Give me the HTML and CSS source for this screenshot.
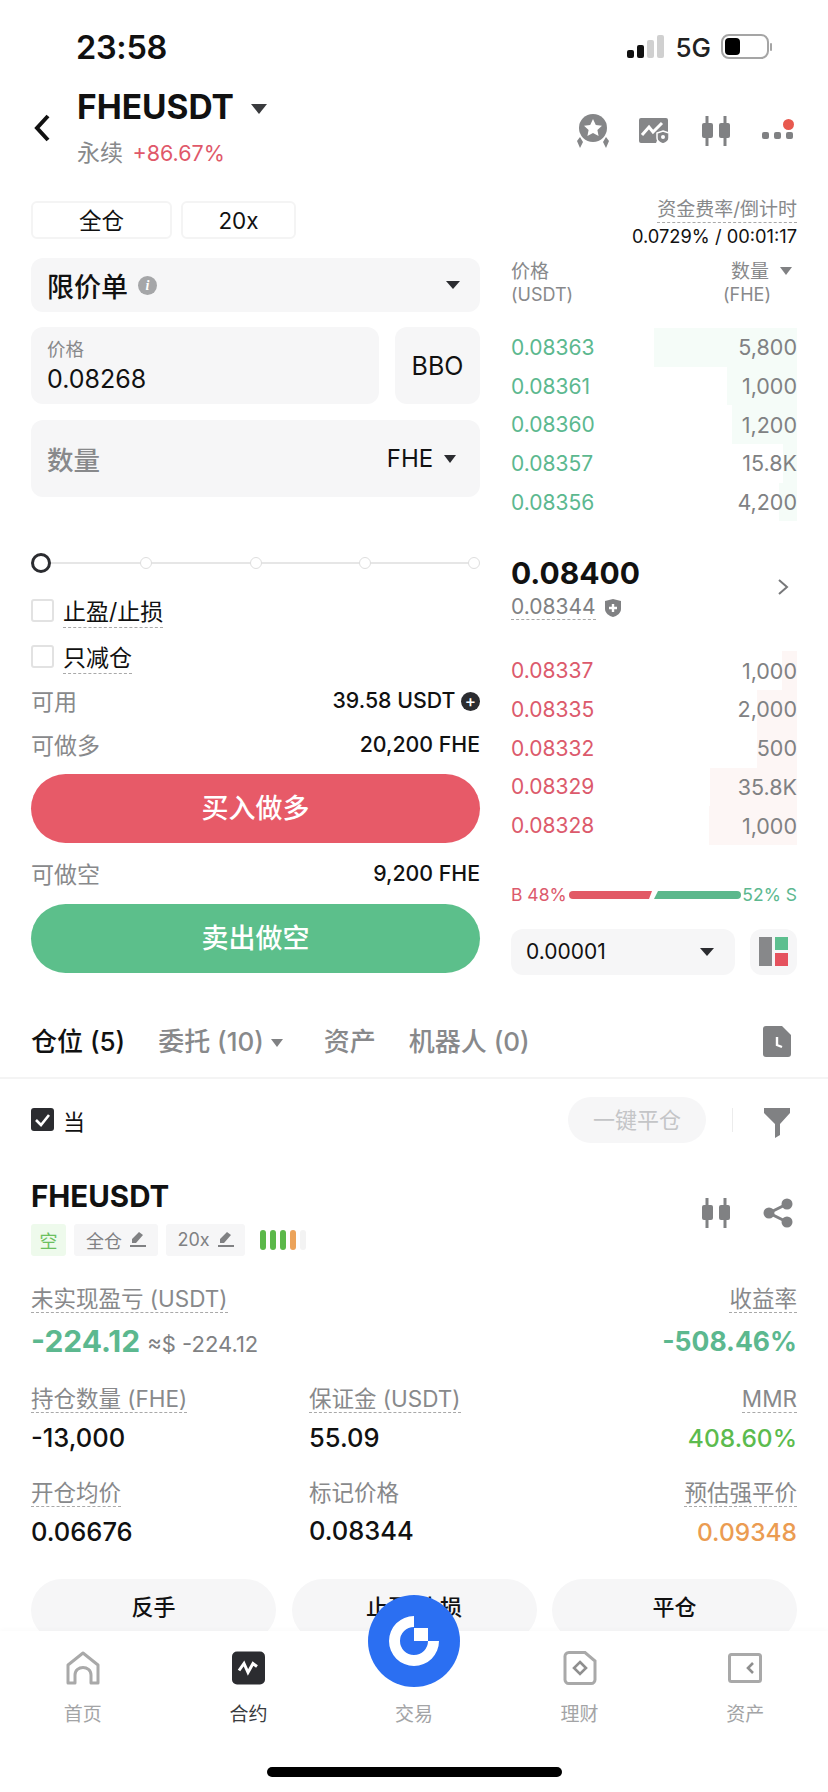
FILE: index.html
```html
<!DOCTYPE html>
<html lang="zh-CN">
<head>
  <meta charset="UTF-8">
  <title>FHEUSDT</title>
  <link rel="stylesheet" href="styles.css">
</head>
<body>
<div class="phone">
  <!-- 状态栏 -->
  <div class="status">
    <span class="time">23:58</span>
    <div class="status-right">
      <svg class="signal" width="38" height="24" viewBox="0 0 38 24">
        <rect x="0" y="15" width="7" height="8" rx="2" fill="#111"/>
        <rect x="10" y="10" width="7" height="13" rx="2" fill="#111"/>
        <rect x="20" y="5" width="7" height="18" rx="2" fill="#d0d0d0"/>
        <rect x="30" y="0" width="7" height="23" rx="2" fill="#d0d0d0"/>
      </svg>
      <span class="net">5G</span>
      <svg width="52" height="26" viewBox="0 0 52 26">
        <rect x="1" y="1" width="46" height="23" rx="7" fill="#fff" stroke="#a5a5a5" stroke-width="2"/>
        <rect x="4" y="4" width="15" height="17" rx="4" fill="#000"/>
        <rect x="49" y="9" width="2" height="8" rx="1" fill="#a5a5a5"/>
      </svg>
    </div>
  </div>

  <!-- 顶部标题 -->
  <div class="header">
    <svg class="back" width="20" height="28" viewBox="0 0 20 28"><path d="M16 2 L5 14 L16 26" fill="none" stroke="#111" stroke-width="4"/></svg>
    <div class="title-wrap">
      <div class="title">FHEUSDT <i class="tri tri-title"></i></div>
      <div class="subtitle">永续 <span class="up">+86.67%</span></div>
    </div>
    <div class="header-icons">
      <svg class="medal" width="36" height="36" viewBox="0 0 36 36">
        <circle cx="18" cy="15" r="14" fill="#858688"/>
        <path d="M18 6 L20.8 12 L27 12.8 L22.4 17 L23.6 23 L18 20 L12.4 23 L13.6 17 L9 12.8 L15.2 12 Z" fill="#fff"/>
        <path d="M2 28 L5 24 L8 29 L5 35 Z M34 28 L31 24 L28 29 L31 35 Z" fill="#858688"/>
      </svg>
      <svg width="32" height="28" viewBox="0 0 32 28">
        <path d="M3 1 H28 A2 2 0 0 1 30 3 V16 H22 L18 26 H3 A2 2 0 0 1 1 24 V3 A2 2 0 0 1 3 1 Z" fill="#858688"/>
        <path d="M4 18 L11 10 L15 15 L24 6" fill="none" stroke="#fff" stroke-width="3"/>
        <path d="M25 14 L31 16 V21 C31 24 28 26 25 27 C22 26 19 24 19 21 V16 Z" fill="#858688" stroke="#fff" stroke-width="1.5"/>
        <circle cx="25" cy="20" r="2" fill="#fff"/>
      </svg>
      <svg width="30" height="30" viewBox="0 0 30 30"><use href="#candles"/></svg>
      <div class="more">
        <i></i><i></i><i></i><b></b>
      </div>
    </div>
  </div>

  <!-- 下单区 + 盘口 -->
  <div class="trade">
    <div class="form">
      <div class="mode-row">
        <div class="mode mode-a">全仓</div>
        <div class="mode mode-b">20x</div>
      </div>
      <div class="box order-type">
        <span class="order-name">限价单</span>
        <i class="info-dot">i</i>
        <i class="tri tri-box"></i>
      </div>
      <div class="price-row">
        <div class="box price-box">
          <div class="price-label">价格</div>
          <div class="price-value">0.08268</div>
        </div>
        <div class="box bbo">BBO</div>
      </div>
      <div class="box qty-box">
        <span class="qty-label">数量</span>
        <span class="qty-unit">FHE <i class="tri tri-box"></i></span>
      </div>
      <div class="slider">
        <i class="knob"></i><i class="dot"></i><i class="dot"></i><i class="dot"></i><i class="dot"></i>
      </div>
      <label class="check check-first"><i class="checkbox"></i><span class="dotted">止盈/止损</span></label>
      <label class="check"><i class="checkbox"></i><span class="dotted">只减仓</span></label>
      <div class="line line-first">
        <span class="muted">可用</span>
        <span>39.58 USDT <i class="plus">+</i></span>
      </div>
      <div class="line"><span class="muted">可做多</span><span>20,200 FHE</span></div>
      <div class="action buy">买入做多</div>
      <div class="line"><span class="muted">可做空</span><span>9,200 FHE</span></div>
      <div class="action sell">卖出做空</div>
    </div>

    <div class="book">
      <div class="funding">
        <span class="funding-label">资金费率/倒计时</span>
        <span class="funding-value">0.0729% / 00:01:17</span>
      </div>
      <div class="book-head">
        <div>价格<br><small>(USDT)</small></div>
        <div class="book-head-right">
          <span>数量</span><i class="tri tri-head"></i><br><small>(FHE)</small>
        </div>
      </div>
      <div class="rows rows-ask">
        <div class="row ask"><i class="depth" style="width:143px"></i><span>0.08363</span><em>5,800</em></div>
        <div class="row ask"><i class="depth" style="width:70px"></i><span>0.08361</span><em>1,000</em></div>
        <div class="row ask"><i class="depth" style="width:65px"></i><span>0.08360</span><em>1,200</em></div>
        <div class="row ask"><i class="depth" style="width:14px"></i><span>0.08357</span><em>15.8K</em></div>
        <div class="row ask"><i class="depth" style="width:18px"></i><span>0.08356</span><em>4,200</em></div>
      </div>
      <div class="mark-wrap">
        <div>
          <div class="last">0.08400</div>
          <div class="mark"><span class="dotted">0.08344</span>
            <svg width="18" height="20" viewBox="0 0 18 20"><path d="M9 1 L17 3 V11 C17 15 13 18 9 19 C5 18 1 15 1 11 V3 Z" fill="#808183"/><path d="M9 6 V14 M5 10 H13" stroke="#fff" stroke-width="2.4"/></svg>
          </div>
        </div>
        <svg width="12" height="18" viewBox="0 0 12 18"><path d="M2 2 L10 9 L2 16" fill="none" stroke="#77787a" stroke-width="2"/></svg>
      </div>
      <div class="rows rows-bid">
        <div class="row bid"><i class="depth" style="width:15px"></i><span>0.08337</span><em>1,000</em></div>
        <div class="row bid"><i class="depth" style="width:40px"></i><span>0.08335</span><em>2,000</em></div>
        <div class="row bid"><i class="depth" style="width:40px"></i><span>0.08332</span><em>500</em></div>
        <div class="row bid"><i class="depth" style="width:87px"></i><span>0.08329</span><em>35.8K</em></div>
        <div class="row bid"><i class="depth" style="width:88px"></i><span>0.08328</span><em>1,000</em></div>
      </div>
      <div class="ratio">
        <span class="down">B 48%</span>
        <svg width="172" height="8" viewBox="0 0 172 8">
          <path d="M4 0 H83 L80 8 H4 A4 4 0 0 1 4 0 Z" fill="#e25a66"/>
          <path d="M89 0 H168 A4 4 0 0 1 168 8 H85 Z" fill="#5cb88c"/>
        </svg>
        <span class="green">52% S</span>
      </div>
      <div class="book-foot">
        <div class="box precision">0.00001 <i class="tri tri-box"></i></div>
        <div class="box layout-btn">
          <svg width="30" height="29" viewBox="0 0 30 29">
            <rect x="0" y="0" width="13" height="29" fill="#87888a"/>
            <rect x="16" y="0" width="13" height="13" fill="#5dbf8f"/>
            <rect x="16" y="16" width="13" height="13" fill="#e5525e"/>
          </svg>
        </div>
      </div>
    </div>
  </div>

  <!-- 仓位 tab -->
  <div class="tabs">
    <span class="tab active">仓位 (5)</span>
    <span class="tab tab-orders">委托 (10) <i class="tri tri-tab"></i></span>
    <span class="tab">资产</span>
    <span class="tab">机器人 (0)</span>
    <svg class="tab-file" width="28" height="31" viewBox="0 0 28 31">
      <path d="M3 0 H19 L28 9 V28 A3 3 0 0 1 25 31 H3 A3 3 0 0 1 0 28 V3 A3 3 0 0 1 3 0 Z" fill="#808183"/>
      <path d="M14 11 V19 L19 21" fill="none" stroke="#fff" stroke-width="2.4"/>
    </svg>
  </div>

  <div class="filter-row">
    <div class="current">
      <svg width="23" height="23" viewBox="0 0 23 23"><rect width="23" height="23" rx="3" fill="#2b2c30"/><path d="M5 12 L10 17 L18 7" fill="none" stroke="#fff" stroke-width="2.6"/></svg>
      <span>当</span>
    </div>
    <div class="close-all">一键平仓</div>
    <i class="vline"></i>
    <svg class="funnel" width="26" height="30" viewBox="0 0 26 30"><path d="M0 0 H26 V5 L16 16 V27 L11 30 V16 L0 5 Z" fill="#808183"/></svg>
  </div>

  <!-- 仓位卡片 -->
  <div class="position">
    <div class="pos-head">
      <span class="pos-name">FHEUSDT</span>
      <div class="pos-icons">
        <svg width="30" height="30" viewBox="0 0 30 30"><use href="#candles"/></svg>
        <svg width="30" height="30" viewBox="0 0 30 30">
          <path d="M24 6 L6 15 L24 24" fill="none" stroke="#808183" stroke-width="3"/>
          <circle cx="24" cy="6" r="5.5" fill="#808183"/><circle cx="6" cy="15" r="5.5" fill="#808183"/><circle cx="24" cy="24" r="5.5" fill="#808183"/>
        </svg>
      </div>
    </div>
    <div class="tags">
      <span class="tag tag-short">空</span>
      <span class="tag tag-edit">全仓 <svg width="16" height="15" viewBox="0 0 16 15"><use href="#pencil"/></svg></span>
      <span class="tag tag-edit tag-lev">20x <svg width="16" height="15" viewBox="0 0 16 15"><use href="#pencil"/></svg></span>
      <span class="adl"><i></i><i></i><i></i><i class="adl-o"></i><i class="adl-e"></i></span>
    </div>
    <div class="pnl-head">
      <span class="stat-label dotted">未实现盈亏 (USDT)</span>
      <span class="stat-label dotted">收益率</span>
    </div>
    <div class="pnl-value">
      <span class="pnl green">-224.12 <small>≈$ -224.12</small></span>
      <span class="pnl-rate green">-508.46%</span>
    </div>
    <div class="stats">
      <div class="stat"><span class="stat-label dotted">持仓数量 (FHE)</span><b>-13,000</b></div>
      <div class="stat"><span class="stat-label dotted">保证金 (USDT)</span><b>55.09</b></div>
      <div class="stat stat-right"><span class="stat-label dotted">MMR</span><b class="lime">408.60%</b></div>
      <div class="stat"><span class="stat-label dotted">开仓均价</span><b>0.06676</b></div>
      <div class="stat"><span class="stat-label">标记价格</span><b>0.08344</b></div>
      <div class="stat stat-right"><span class="stat-label dotted">预估强平价</span><b class="orange">0.09348</b></div>
    </div>
    <div class="pos-actions">
      <div class="pos-btn">反手</div>
      <div class="pos-btn">止盈/止损</div>
      <div class="pos-btn">平仓</div>
    </div>
  </div>

  <!-- 底部导航 -->
  <div class="nav">
    <div class="nav-item">
      <svg width="34" height="34" viewBox="0 0 34 34"><path d="M2 32 V14 L17 2 L32 14 V32 H25 V24 C25 14 9 14 9 24 V32 Z" fill="none" stroke="#a9a9a9" stroke-width="3" stroke-linejoin="round"/></svg>
      <span>首页</span>
    </div>
    <div class="nav-item nav-on">
      <svg width="33" height="33" viewBox="0 0 33 33"><rect width="33" height="33" rx="5" fill="#2b2c30"/><path d="M7 19 L12 12 L16 21 L21 12 L25 15" fill="none" stroke="#fff" stroke-width="3"/></svg>
      <span>合约</span>
    </div>
    <div class="nav-item">
      <i class="nav-gap"></i>
      <span>交易</span>
    </div>
    <div class="nav-item">
      <svg width="34" height="34" viewBox="0 0 34 34"><path d="M6 1.5 H22 L32 10 V28 A4 4 0 0 1 28 32.5 H6 A4 4 0 0 1 2 28 V6 A4 4 0 0 1 6 1.5 Z" fill="none" stroke="#a9a9a9" stroke-width="3"/><path d="M17 11 L23 17 L17 23 L11 17 Z" fill="none" stroke="#8f8f8f" stroke-width="2.6"/></svg>
      <span>理财</span>
    </div>
    <div class="nav-item">
      <svg width="34" height="30" viewBox="0 0 34 30"><rect x="1.5" y="1.5" width="31" height="27" rx="2" fill="none" stroke="#a9a9a9" stroke-width="3"/><path d="M25 10 L20 15 L25 20" fill="none" stroke="#8f8f8f" stroke-width="2.6"/></svg>
      <span>资产</span>
    </div>
  </div>
  <div class="fab">
    <svg width="56" height="56" viewBox="-28 -28 56 56">
      <path d="M0 -25 A25 25 0 1 0 25 0 H14 A14 14 0 1 1 0 -14 Z" fill="#fff"/>
      <rect x="0" y="-13" width="14" height="13" fill="#fff"/>
    </svg>
  </div>
  <div class="home-bar"></div>
</div>

<!-- 重复使用的图标 -->
<svg class="defs" width="0" height="0">
  <symbol id="candles" viewBox="0 0 30 30">
    <path d="M6 0 V30 M24 0 V30" stroke="#808183" stroke-width="3"/>
    <rect x="1" y="7" width="11" height="15" rx="2" fill="#808183"/>
    <rect x="18" y="7" width="11" height="15" rx="2" fill="#808183"/>
  </symbol>
  <symbol id="pencil" viewBox="0 0 16 15">
    <path d="M9 0 L13 3 L6 11 L2 11 L2 7 Z M0 13 H16 V15 H0 Z" fill="#808183"/>
  </symbol>
</svg>
</body>
</html>
```

FILE: styles.css
```css
/* 基本样式 */
* {
  box-sizing: border-box;
}
body {
  margin: 0;
  background-color: #fff;
  color: #111;
  font-family: Inter, "Noto Sans CJK SC", sans-serif;
}
i {
  font-style: normal;
}
.phone {
  position: relative;
  width: 828px;
  height: 1792px;
  overflow: hidden;
}
.defs {
  position: absolute;
}

/* 三角箭头 */
.tri {
  display: inline-block;
  width: 0;
  height: 0;
  border-left: 7px solid transparent;
  border-right: 7px solid transparent;
  border-top: 8px solid #2b2c30;
}
.tri-title {
  border-left-width: 8px;
  border-right-width: 8px;
  border-top-width: 10px;
  border-top-color: #3a3b3e;
  margin-left: 9px;
  vertical-align: 5px;
}
.tri-head {
  border-left-width: 6px;
  border-right-width: 6px;
  border-top-color: #808183;
  margin-left: 11px;
  vertical-align: 3px;
}
.tri-tab {
  border-left-width: 6px;
  border-right-width: 6px;
  border-top-color: #808183;
  vertical-align: 4px;
}

/* 状态栏 */
.status {
  display: flex;
  align-items: center;
  justify-content: space-between;
  height: 66px;
  padding: 28px 55px 0 76px;
}
.time {
  font-size: 32.5px;
  font-weight: 600;
  letter-spacing: -0.3px;
}
.status-right {
  display: flex;
  align-items: center;
  gap: 10px;
}
.net {
  font-size: 26px;
  font-weight: 500;
  color: #222;
}

/* 标题 */
.header {
  display: flex;
  align-items: center;
  height: 100px;
  padding: 20px 35px 0 32px;
}
.back {
  margin-top: 4px;
  margin-right: 25px;
}
.title-wrap {
  flex: 1;
}
.title {
  font-size: 33.5px;
  font-weight: 700;
  line-height: 46px;
}
.subtitle {
  margin-top: 8px;
  font-size: 23px;
  line-height: 30px;
  color: #88898b;
}
.up {
  margin-left: 3px;
  color: #e0586a;
  font-size: 21.5px;
}
.header-icons {
  display: flex;
  align-items: center;
  gap: 31px;
  margin-top: 10px;
}
.medal {
  margin-right: -4px;
}
.more {
  position: relative;
  display: flex;
  gap: 5px;
  margin-top: 8px;
}
.more i {
  width: 7px;
  height: 7px;
  border-radius: 2px;
  background-color: #808183;
}
.more b {
  position: absolute;
  top: -13px;
  right: -1px;
  width: 11px;
  height: 11px;
  border-radius: 50%;
  background-color: #e8594f;
}

/* 下单区与盘口 */
.trade {
  display: grid;
  grid-template-columns: 449px 286px;
  column-gap: 31px;
  padding: 0 31px;
  margin-top: 30px;
}
.form {
  padding-top: 5px;
}
.mode-row {
  display: flex;
  gap: 9px;
}
.mode {
  height: 38px;
  border: 2px solid #f4f4f4;
  border-radius: 6px;
  text-align: center;
  font-size: 22.5px;
  line-height: 35px;
}
.mode-a {
  width: 141px;
}
.mode-b {
  width: 115px;
}
.box {
  display: flex;
  align-items: center;
  background-color: #f6f6f7;
  border-radius: 12px;
}
.order-type {
  height: 54px;
  margin-top: 19px;
  padding: 0 20px 0 16px;
}
.order-name {
  font-size: 27px;
  font-weight: 500;
}
.info-dot {
  width: 19px;
  height: 19px;
  margin-left: 10px;
  margin-right: auto;
  border-radius: 50%;
  background-color: #a5a6a8;
  color: #fff;
  font-family: "Liberation Serif", serif;
  font-size: 14px;
  font-weight: 700;
  font-style: italic;
  line-height: 19px;
  text-align: center;
}
.price-row {
  display: flex;
  gap: 16px;
  margin-top: 15px;
}
.price-box {
  display: block;
  flex: 1;
  height: 77px;
  padding: 10px 16px 0;
}
.price-label {
  font-size: 18.5px;
  line-height: 24px;
  color: #88898b;
}
.price-value {
  margin-top: 4px;
  font-size: 25px;
  line-height: 28px;
}
.bbo {
  justify-content: center;
  width: 85px;
  height: 77px;
  font-size: 25px;
}
.qty-box {
  justify-content: space-between;
  height: 77px;
  margin-top: 16px;
  padding: 0 24px 0 16px;
}
.qty-label {
  font-size: 26.5px;
  font-weight: 500;
  color: #88898b;
}
.qty-unit {
  font-size: 24px;
}
.qty-unit .tri {
  border-left-width: 6px;
  border-right-width: 6px;
  margin-left: 4px;
  vertical-align: 4px;
}
.slider {
  position: relative;
  display: flex;
  align-items: center;
  justify-content: space-between;
  height: 20px;
  margin-top: 56px;
}
.slider::before {
  content: "";
  position: absolute;
  left: 10px;
  right: 4px;
  top: 9px;
  height: 2px;
  background-color: #e6e6e6;
}
.knob {
  position: relative;
  width: 20px;
  height: 20px;
  margin-right: -8px;
  border: 3.5px solid #2b2c30;
  border-radius: 50%;
  background-color: #fff;
}
.dot {
  position: relative;
  width: 12px;
  height: 12px;
  border: 1.5px solid #dedede;
  border-radius: 50%;
  background-color: #fff;
}
.check {
  display: flex;
  align-items: center;
  gap: 9px;
  height: 22px;
  margin-top: 24px;
  font-size: 23px;
}
.check-first {
  margin-top: 26px;
}
.checkbox {
  width: 23px;
  height: 23px;
  border: 2px solid #e2e2e2;
  border-radius: 3px;
}
.dotted {
  border-bottom: 1px dashed #a9a9a9;
}
.line {
  display: flex;
  align-items: center;
  justify-content: space-between;
  height: 30px;
  margin-top: 15px;
  font-size: 21.3px;
  font-weight: 500;
}
.line-first {
  margin-top: 18px;
}
.line + .line {
  margin-top: 14px;
}
.muted {
  color: #88898b;
  font-size: 23px;
  font-weight: 400;
}
.plus {
  display: inline-block;
  width: 19px;
  height: 19px;
  border-radius: 50%;
  background-color: #2b2c30;
  color: #fff;
  font-size: 17px;
  line-height: 18px;
  text-align: center;
  vertical-align: 1px;
}
.action {
  height: 69px;
  margin-top: 15px;
  border-radius: 35px;
  color: #fff;
  font-size: 27px;
  font-weight: 500;
  line-height: 69px;
  text-align: center;
}
.buy {
  background-color: #e75a68;
}
.sell {
  margin-top: 16px;
  background-color: #5cbf8b;
}

/* 盘口 */
.funding {
  display: flex;
  flex-direction: column;
  align-items: flex-end;
  height: 62px;
  margin-top: 2px;
}
.funding-label {
  font-size: 19px;
  line-height: 24px;
  color: #88898b;
  border-bottom: 1px dashed #a9a9a9;
}
.funding-value {
  font-size: 18.3px;
  line-height: 26px;
}
.book-head {
  display: flex;
  justify-content: space-between;
  height: 68px;
  font-size: 19px;
  line-height: 23px;
  color: #88898b;
}
.book-head small {
  font-size: 18px;
}
.book-head-right {
  text-align: right;
  padding-right: 5px;
}
.book-head-right small {
  margin-right: 21px;
}
.row {
  position: relative;
  display: flex;
  align-items: center;
  justify-content: space-between;
  height: 38.7px;
  font-size: 21px;
}
.row span {
  position: relative;
}
.row em {
  position: relative;
  font-size: 21.5px;
  font-style: normal;
  color: #808183;
}
.depth {
  position: absolute;
  top: 0;
  right: 0;
  bottom: 0;
}
.ask span {
  color: #5cb88f;
}
.ask .depth {
  background-color: #f5fcf8;
}
.bid span {
  color: #dc5a6c;
}
.bid .depth {
  background-color: #fdf6f5;
}
.mark-wrap {
  display: flex;
  align-items: center;
  justify-content: space-between;
  height: 132px;
  padding-right: 8px;
}
.last {
  font-size: 30px;
  font-weight: 700;
  line-height: 38px;
}
.mark {
  display: flex;
  align-items: center;
  gap: 8px;
  margin-top: 3px;
  font-size: 21px;
  line-height: 24px;
  color: #808183;
}
.rows-bid {
  margin-top: -2px;
}
.ratio {
  display: flex;
  align-items: center;
  justify-content: space-between;
  height: 24px;
  margin-top: 38px;
  font-size: 17.5px;
}
.down {
  color: #dc5a6c;
}
.green {
  color: #5cb88f;
}
.book-foot {
  display: flex;
  justify-content: space-between;
  margin-top: 22px;
}
.precision {
  justify-content: space-between;
  width: 224px;
  height: 46px;
  padding: 0 21px 0 15px;
  font-size: 21px;
}
.layout-btn {
  justify-content: center;
  width: 47px;
  height: 46px;
}

/* tab */
.tabs {
  display: flex;
  align-items: center;
  gap: 33px;
  height: 73px;
  margin-top: 31px;
  padding: 0 37px 3px 31px;
  border-bottom: 2px solid #f4f4f4;
  font-size: 26px;
  font-weight: 500;
  color: #88898b;
}
.active {
  color: #111;
}
.tab-orders {
  margin-right: 8px;
}
.tab-file {
  margin-top: 4px;
  margin-left: auto;
}
.filter-row {
  display: flex;
  align-items: center;
  height: 46px;
  margin-top: 18px;
  padding: 0 38px 0 31px;
}
.current {
  display: flex;
  align-items: center;
  gap: 9px;
  margin-right: auto;
  font-size: 22px;
}
.close-all {
  width: 138px;
  height: 46px;
  border-radius: 23px;
  background-color: #f6f6f7;
  color: #c4c5c7;
  font-size: 22px;
  line-height: 46px;
  text-align: center;
}
.vline {
  width: 1px;
  height: 24px;
  margin: 0 31px 0 26px;
  background-color: #ececec;
}
.funnel {
  margin-top: 6px;
}

/* 仓位卡片 */
.position {
  padding: 0 31px;
}
.pos-head {
  display: flex;
  align-items: center;
  justify-content: space-between;
  height: 36px;
  margin-top: 35px;
}
.pos-name {
  font-size: 29.5px;
  font-weight: 700;
}
.pos-icons {
  display: flex;
  gap: 32px;
  margin-top: 34px;
  margin-right: 4px;
}
.tags {
  display: flex;
  align-items: center;
  gap: 8px;
  height: 32px;
  margin-top: 10px;
}
.tag {
  display: flex;
  align-items: center;
  justify-content: center;
  height: 32px;
  border-radius: 3px;
  background-color: #f6f6f7;
  color: #808183;
  font-size: 18px;
}
.tag-short {
  width: 35px;
  background-color: #eefaec;
  color: #6cc05e;
}
.tag-edit {
  gap: 8px;
  width: 84px;
}
.tag-lev {
  width: 79px;
}
.adl {
  display: flex;
  gap: 4px;
  margin-left: 7px;
}
.adl i {
  width: 6px;
  height: 20px;
  border-radius: 3px;
  background-color: #5bb84a;
}
.adl .adl-o {
  background-color: #eca35a;
}
.adl .adl-e {
  background-color: #f3f3f3;
}
.pnl-head {
  display: flex;
  align-items: center;
  justify-content: space-between;
  height: 26px;
  margin-top: 31px;
}
.stat-label {
  font-size: 22.5px;
  line-height: 26px;
  color: #88898b;
}
.pnl-value {
  display: flex;
  align-items: center;
  justify-content: space-between;
  height: 40px;
  margin-top: 8px;
}
.pnl {
  font-size: 30px;
  font-weight: 700;
}
.pnl-rate {
  font-size: 26.5px;
  font-weight: 700;
}
.pnl small {
  font-size: 22px;
  font-weight: 400;
  color: #808183;
}
.stats {
  display: grid;
  grid-template-columns: 278px 1fr 1fr;
  row-gap: 24px;
  margin-top: 25px;
}
.stat {
  display: flex;
  flex-direction: column;
  align-items: flex-start;
}
.stat b {
  margin-top: 7px;
  font-size: 25.5px;
  font-weight: 500;
  line-height: 36px;
}
.stat-right {
  align-items: flex-end;
}
.stat b.lime {
  font-size: 24.5px;
  color: #5cbb4e;
}
.stat b.orange {
  font-size: 24.5px;
  color: #eb9c52;
}
.pos-actions {
  display: grid;
  grid-template-columns: repeat(3, 245px);
  justify-content: space-between;
  margin-top: 29px;
}
.pos-btn {
  height: 62px;
  border-radius: 31px;
  background-color: #f6f6f7;
  font-size: 22px;
  font-weight: 500;
  line-height: 56px;
  text-align: center;
}

/* 底部导航，盖在内容上面 */
.nav {
  position: absolute;
  left: 0;
  right: 0;
  bottom: 0;
  display: grid;
  grid-template-columns: repeat(5, 1fr);
  height: 161px;
  padding-top: 20px;
  background-color: #fff;
  box-shadow: 0 -2px 4px rgba(0, 0, 0, 0.02);
}
.nav-item {
  display: flex;
  flex-direction: column;
  align-items: center;
  color: #a3a4a6;
  font-size: 19px;
}
.nav-item svg,
.nav-gap {
  display: block;
  height: 34px;
}
.nav-item span {
  margin-top: 14px;
}
.nav-on {
  color: #3a3b3e;
}
.fab {
  position: absolute;
  left: 368px;
  top: 1595px;
  display: flex;
  align-items: center;
  justify-content: center;
  width: 92px;
  height: 92px;
  border-radius: 50%;
  background-color: #2b6ff2;
}
.home-bar {
  position: absolute;
  left: 267px;
  top: 1767px;
  width: 295px;
  height: 10px;
  border-radius: 5px;
  background-color: #000;
}
```
